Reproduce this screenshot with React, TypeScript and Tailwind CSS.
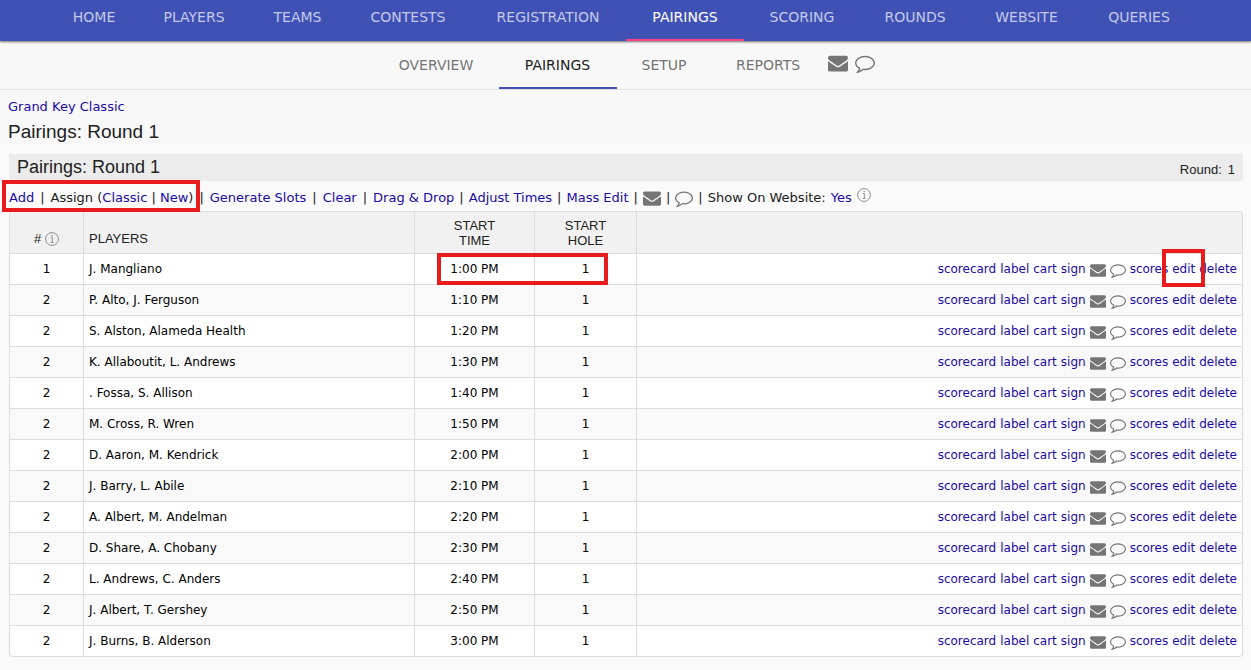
import React from "react";

type Tab = { label: string; width: string };

const mainTabs: Tab[] = [
  { label: "HOME", width: "w-[90px]" },
  { label: "PLAYERS", width: "w-[110px]" },
  { label: "TEAMS", width: "w-[97px]" },
  { label: "CONTESTS", width: "w-[124px]" },
  { label: "REGISTRATION", width: "w-[156px]" },
  { label: "PAIRINGS", width: "w-[118px]" },
  { label: "SCORING", width: "w-[116px]" },
  { label: "ROUNDS", width: "w-[110px]" },
  { label: "WEBSITE", width: "w-[113px]" },
  { label: "QUERIES", width: "w-[112px]" },
];

const subTabs: Tab[] = [
  { label: "OVERVIEW", width: "w-[125px]" },
  { label: "PAIRINGS", width: "w-[118px]" },
  { label: "SETUP", width: "w-[95px]" },
  { label: "REPORTS", width: "w-[113px]" },
];

const pairings = [
  { count: 1, players: "J. Mangliano", time: "1:00 PM", hole: 1 },
  { count: 2, players: "P. Alto, J. Ferguson", time: "1:10 PM", hole: 1 },
  { count: 2, players: "S. Alston, Alameda Health", time: "1:20 PM", hole: 1 },
  { count: 2, players: "K. Allaboutit, L. Andrews", time: "1:30 PM", hole: 1 },
  { count: 2, players: ". Fossa, S. Allison", time: "1:40 PM", hole: 1 },
  { count: 2, players: "M. Cross, R. Wren", time: "1:50 PM", hole: 1 },
  { count: 2, players: "D. Aaron, M. Kendrick", time: "2:00 PM", hole: 1 },
  { count: 2, players: "J. Barry, L. Abile", time: "2:10 PM", hole: 1 },
  { count: 2, players: "A. Albert, M. Andelman", time: "2:20 PM", hole: 1 },
  { count: 2, players: "D. Share, A. Chobany", time: "2:30 PM", hole: 1 },
  { count: 2, players: "L. Andrews, C. Anders", time: "2:40 PM", hole: 1 },
  { count: 2, players: "J. Albert, T. Gershey", time: "2:50 PM", hole: 1 },
  { count: 2, players: "J. Burns, B. Alderson", time: "3:00 PM", hole: 1 },
];

function EnvelopeIcon({ className }: { className: string }) {
  return (
    <svg viewBox="0 0 1792 1792" fill="currentColor" aria-hidden="true" className={className}>
      <path d="M1792 710v794q0 66-47 113t-113 47h-1472q-66 0-113-47t-47-113v-794q44 49 101 87 362 246 497 345 57 42 92.5 65.5t94.5 48 110 24.500h2q51 0 110-24.500t94.500-48 92.500-65.500q170-123 498-345 57-39 100-87zm0-294q0 79-49 151t-122 123q-376 261-468 325-10 7-42.500 31t-54 38.500-52 32.500-57.500 27-50 9h-2q-23 0-50-9t-57.500-27-52-32.500-54-38.500-42.500-31q-91-64-262-182.500t-205-142.500q-62-42-117-115.500t-55-136.500q0-78 41.500-130t118.500-52h1472q65 0 112.500 47t47.500 113z" />
    </svg>
  );
}

function CommentIcon({ className }: { className: string }) {
  return (
    <svg viewBox="0 0 1792 1792" fill="currentColor" aria-hidden="true" className={className}>
      <path d="M896 384q-204 0-381.500 69.500t-282 187.500-104.500 255q0 112 71.500 213.500t201.500 175.500l87 50-27 96q-24 91-70 172 152-63 275-171l43-38 57 6q69 8 130 8 204 0 381.500-69.500t282-187.500 104.500-255-104.500-255-282-187.500-381.500-69.500zm896 512q0 174-120 321.500t-326 233-450 85.500q-70 0-145-8-198 175-460 242-49 14-114 22h-5q-15 0-27-10.500t-16-27.500v-1q-3-4-.5-12t2-10 4.500-9.500l6-9 7-8.500 8-9q7-8 31-34.500t34.500-38 31-39.500 32.500-51 27-59 26-76q-157-89-247.500-220t-90.500-281q0-174 120-321.500t326-233 450-85.500 450 85.500 326 233 120 321.500z" />
    </svg>
  );
}

function InfoIcon() {
  return (
    <svg viewBox="0 0 14 14" fill="none" stroke="currentColor" aria-hidden="true" className="size-3.5 shrink-0 text-[#8c8c8c]">
      <circle cx="7" cy="7" r="6.4" strokeWidth="1" />
      <path d="M5.6 5.6H7.4V10.3M5.6 10.5H8.8" strokeWidth="0.9" />
      <path d="M7.1 3V4.3" strokeWidth="1.4" />
    </svg>
  );
}

function Link({ children }: { children: React.ReactNode }) {
  return (
    <a href="#" className="text-[#1b0aa6]">
      {children}
    </a>
  );
}

function Bar() {
  return <span>|</span>;
}

export default function App() {
  return (
    <div className="min-h-screen bg-[#fafafa] font-['Verdana','DejaVu_Sans',sans-serif] text-[13px] leading-4 text-[#212121]">
      <header className="relative h-[41px] bg-[#3f51b5] shadow-[0_1px_2px_rgba(0,0,0,0.55)]">
        <nav aria-label="Main" className="flex h-full pl-[49px] text-sm">
          {mainTabs.map((tab) => {
            const active = tab.label === "PAIRINGS";
            return (
              <a
                key={tab.label}
                href="#"
                className={`${tab.width} shrink-0 border-b-2 pt-[7px] text-center ${
                  active ? "border-[#ff4081] text-white" : "border-transparent text-[#c5cae9]"
                }`}
              >
                {tab.label}
              </a>
            );
          })}
        </nav>
      </header>

      <nav aria-label="Section" className="flex h-[49px] justify-center border-b border-[#e0e0e0] bg-[#f8f8f8] text-sm text-[#757575]">
        {subTabs.map((tab) => {
          const active = tab.label === "PAIRINGS";
          return (
            <a
              key={tab.label}
              href="#"
              className={`${tab.width} shrink-0 border-b-2 pt-[14px] text-center ${
                active ? "border-[#3f51b5] text-[#212121]" : "border-transparent"
              }`}
            >
              {tab.label}
            </a>
          );
        })}
        <div className="flex gap-[7px] px-[3px] pt-3">
          <a href="#" aria-label="Email">
            <EnvelopeIcon className="size-5" />
          </a>
          <a href="#" aria-label="Text message">
            <CommentIcon className="size-5" />
          </a>
        </div>
      </nav>

      <div className="bg-[#f8f8f8] px-2 pt-[9px]">
        <Link>Grand Key Classic</Link>
        <h1 className="mt-[5px] pb-px font-['Liberation_Sans',Arial,sans-serif] text-[19px] leading-6">Pairings: Round 1</h1>
      </div>

      <main className="mr-2 ml-[9px] pt-[9px]">
        <div className="flex h-[27px] items-center justify-between bg-[#ececec] px-2 font-['Liberation_Sans',Arial,sans-serif]">
          <h2 className="pb-0.5 text-lg leading-6">Pairings: Round 1</h2>
          <p className="flex gap-1.5 pt-1">
            <span>Round:</span>
            <span>1</span>
          </p>
        </div>

        <div className="flex h-[30px] items-center gap-1.5 whitespace-nowrap pt-1">
          <div className="relative flex gap-1.5">
            <Link>Add</Link>
            <Bar />
            <span>
              Assign (<Link>Classic</Link> | <Link>New</Link>)
            </span>
            <div className="pointer-events-none absolute -inset-x-[7px] -top-[10px] h-8 border-4 border-[#e81c1c]" />
          </div>
          <Bar />
          <Link>Generate Slots</Link>
          <Bar />
          <Link>Clear</Link>
          <Bar />
          <div className="flex items-center gap-[5px]">
            <Link>Drag &amp; Drop</Link>
            <Bar />
            <Link>Adjust Times</Link>
            <Bar />
            <Link>Mass Edit</Link>
            <Bar />
            <a href="#" aria-label="Email all" className="text-[#757575]">
              <EnvelopeIcon className="size-[18px]" />
            </a>
            <Bar />
            <a href="#" aria-label="Text all" className="text-[#757575]">
              <CommentIcon className="size-[18px]" />
            </a>
            <Bar />
            <span>Show On Website:</span>
            <Link>Yes</Link>
            <span className="pb-1.5">
              <InfoIcon />
            </span>
          </div>
        </div>

        <table className="w-full table-fixed border-separate border-spacing-0 rounded border-t border-l border-[#dcdcdc] bg-white text-xs text-black">
          <thead>
            <tr className="h-[42px] bg-[#f1f1f1] font-['Liberation_Sans',Arial,sans-serif] text-[13px] leading-[15px] text-[#212121] [&>*]:border-r [&>*]:border-b [&>*]:border-[#dcdcdc] [&>*]:p-0 [&>*]:font-normal">
              <th className="w-[74px] rounded-tl align-bottom">
                <span className="flex items-center justify-center gap-1 pb-[7px]">
                  # <InfoIcon />
                </span>
              </th>
              <th className="w-[331px] text-left align-bottom">
                <span className="block pb-[7px] pl-[5px]">PLAYERS</span>
              </th>
              <th className="w-[120px]">
                START
                <br />
                TIME
              </th>
              <th className="w-[102px]">
                START
                <br />
                HOLE
              </th>
              <td className="rounded-tr" />
            </tr>
          </thead>
          <tbody>
            {pairings.map((row, index) => (
              <tr
                key={row.time}
                className="h-[31px] even:bg-[#f9f9f9] [&>td]:border-r [&>td]:border-b [&>td]:border-[#dcdcdc] [&>td]:px-[5px] [&>td]:py-0 last:[&>td:first-child]:rounded-bl last:[&>td:last-child]:rounded-br"
              >
                <td className="text-center">{row.count}</td>
                <td>{row.players}</td>
                <td className="relative text-center">
                  {row.time}
                  {index === 0 && (
                    <div className="pointer-events-none absolute -top-px left-[22px] z-10 h-8 w-[171px] border-4 border-[#e81c1c]" />
                  )}
                </td>
                <td className="text-center">{row.hole}</td>
                <td>
                  <div className="flex items-center justify-end gap-1 whitespace-nowrap">
                    <Link>scorecard</Link>
                    <Link>label</Link>
                    <Link>cart</Link>
                    <Link>sign</Link>
                    <a href="#" aria-label={`Email ${row.players}`} className="pt-0.5 text-[#757575]">
                      <EnvelopeIcon className="size-4" />
                    </a>
                    <a href="#" aria-label={`Text ${row.players}`} className="pt-0.5 text-[#757575]">
                      <CommentIcon className="size-4" />
                    </a>
                    <Link>scores</Link>
                    <span className="relative">
                      <Link>edit</Link>
                      {index === 0 && (
                        <div className="pointer-events-none absolute -inset-x-[10px] -top-3 h-[38px] border-4 border-[#e81c1c]" />
                      )}
                    </span>
                    <Link>delete</Link>
                  </div>
                </td>
              </tr>
            ))}
          </tbody>
        </table>
      </main>
    </div>
  );
}
